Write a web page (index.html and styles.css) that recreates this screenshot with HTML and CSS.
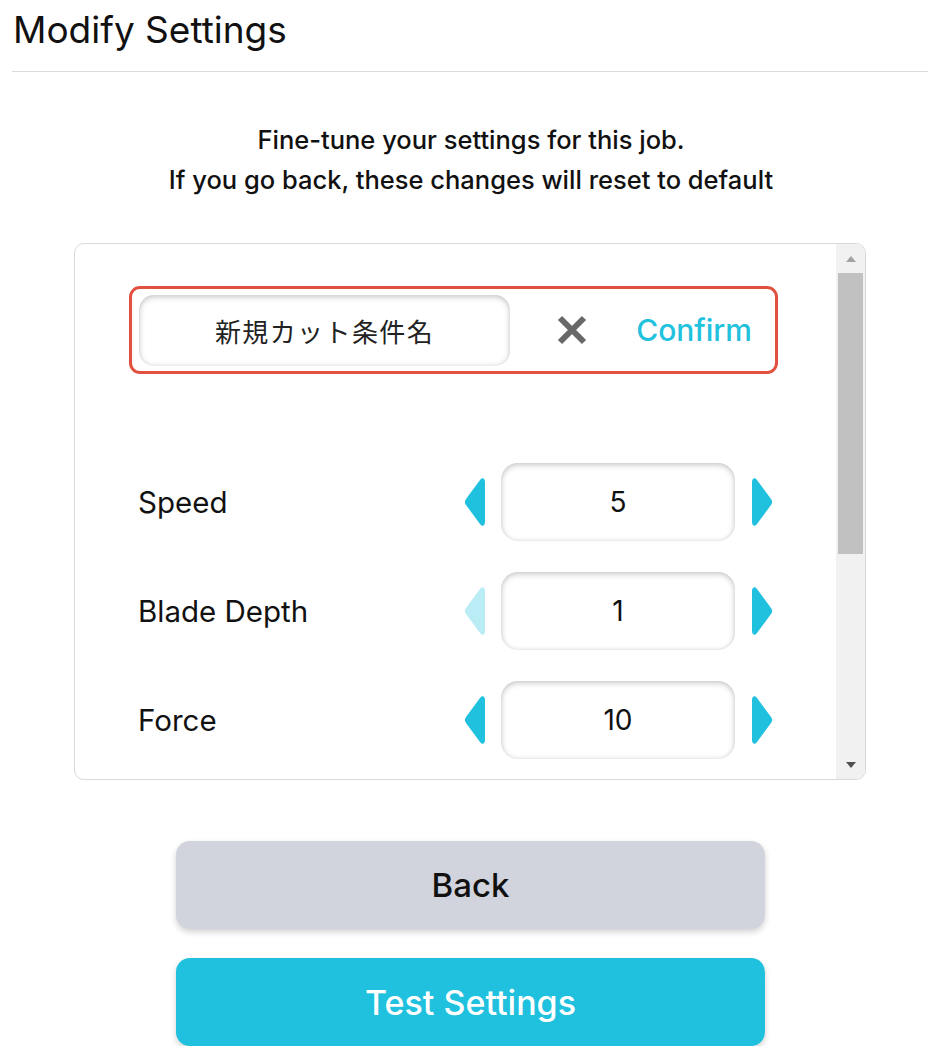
FILE: index.html
```html
<!DOCTYPE html>
<html lang="en">
<head>
<meta charset="utf-8">
<title>Modify Settings</title>
<link rel="stylesheet" href="styles.css">
</head>
<body>
<div class="page">
  <h1 class="title">Modify Settings</h1>
  <div class="divider"></div>
  <p class="intro">Fine-tune your settings for this job.<br>If you go back, these changes will reset to default</p>

  <div class="card">
    <div class="card-body">
      <div class="name-row">
        <div class="name-input">新規カット条件名</div>
        <span class="cancel" aria-label="Cancel">
          <svg width="34" height="34" viewBox="0 0 34 34"><path d="M5 5 L29 29 M29 5 L5 29" stroke="#686868" stroke-width="6" stroke-linecap="butt" fill="none"/></svg>
        </span>
        <span class="confirm">Confirm</span>
      </div>

      <div class="settings">
        <div class="setting">
          <span class="label">Speed</span>
          <div class="stepper">
            <svg class="arrow" width="21" height="50" viewBox="0 0 21 50"><path d="M21 5 C21 1 18 0 16 3 L2 22 C0.5 24 0.5 26 2 28 L16 47 C18 50 21 49 21 45 Z" fill="#20c1de"/></svg>
            <div class="value">5</div>
            <svg class="arrow" width="21" height="50" viewBox="0 0 21 50"><path d="M0 5 C0 1 3 0 5 3 L19 22 C20.5 24 20.5 26 19 28 L5 47 C3 50 0 49 0 45 Z" fill="#20c1de"/></svg>
          </div>
        </div>
        <div class="setting">
          <span class="label">Blade Depth</span>
          <div class="stepper">
            <svg class="arrow" width="21" height="50" viewBox="0 0 21 50"><path d="M21 5 C21 1 18 0 16 3 L2 22 C0.5 24 0.5 26 2 28 L16 47 C18 50 21 49 21 45 Z" fill="#b9ecf5"/></svg>
            <div class="value">1</div>
            <svg class="arrow" width="21" height="50" viewBox="0 0 21 50"><path d="M0 5 C0 1 3 0 5 3 L19 22 C20.5 24 20.5 26 19 28 L5 47 C3 50 0 49 0 45 Z" fill="#20c1de"/></svg>
          </div>
        </div>
        <div class="setting">
          <span class="label">Force</span>
          <div class="stepper">
            <svg class="arrow" width="21" height="50" viewBox="0 0 21 50"><path d="M21 5 C21 1 18 0 16 3 L2 22 C0.5 24 0.5 26 2 28 L16 47 C18 50 21 49 21 45 Z" fill="#20c1de"/></svg>
            <div class="value">10</div>
            <svg class="arrow" width="21" height="50" viewBox="0 0 21 50"><path d="M0 5 C0 1 3 0 5 3 L19 22 C20.5 24 20.5 26 19 28 L5 47 C3 50 0 49 0 45 Z" fill="#20c1de"/></svg>
          </div>
        </div>
      </div>
    </div>

    <div class="scrollbar">
      <div class="sb-btn"><svg width="12" height="8" viewBox="0 0 12 8"><path d="M6 1 L11 7 L1 7 Z" fill="#a3a3a3"/></svg></div>
      <div class="sb-thumb"></div>
      <div class="sb-track"></div>
      <div class="sb-btn"><svg width="12" height="8" viewBox="0 0 12 8"><path d="M1 1 L11 1 L6 7 Z" fill="#505050"/></svg></div>
    </div>
  </div>

  <div class="actions">
    <button class="btn btn-back">Back</button>
    <button class="btn btn-test">Test Settings</button>
  </div>
</div>
</body>
</html>
```

FILE: styles.css
```css
* { box-sizing: border-box; }

html, body {
  margin: 0;
  padding: 0;
  background: #ffffff;
}

body {
  font-family: "Inter", "Lato", "Noto Sans", sans-serif;
  color: #111111;
}

.page {
  width: 942px;
  display: flex;
  flex-direction: column;
}

.title {
  margin: 0;
  padding: 8px 0 0 13px;
  font-size: 37px;
  font-weight: 400;
  line-height: 44px;
  color: #111;
}

.divider {
  height: 1px;
  background: #dcdcdf;
  margin: 19px 14px 0 12px;
}

.intro {
  margin: 48px 0 0 0;
  text-align: center;
  font-size: 25.5px;
  font-weight: 500;
  line-height: 40px;
  color: #111;
}

.card {
  margin: 43px 0 0 74px;
  width: 792px;
  height: 537px;
  border: 1px solid #d8d8dd;
  border-radius: 10px;
  overflow: hidden;
  display: flex;
}

.card-body {
  flex: 1;
  padding: 42px 58px 0 54px;
  display: flex;
  flex-direction: column;
}

.name-row {
  height: 88px;
  border: 3px solid #e2513f;
  border-radius: 11px;
  display: flex;
  align-items: center;
  padding: 0 23px 0 7px;
}

.name-input {
  width: 371px;
  height: 71px;
  border-radius: 15px;
  background: #fff;
  box-shadow: inset 0 2px 6px rgba(0, 0, 0, 0.2), inset 0 0 4px rgba(0, 0, 0, 0.08);
  display: flex;
  align-items: center;
  justify-content: center;
  font-family: "Noto Sans CJK JP", "Noto Sans", sans-serif;
  font-size: 26px;
  letter-spacing: 1.4px;
  font-weight: 400;
  color: #222;
}

.cancel {
  display: flex;
  margin-left: 45px;
}

.confirm {
  margin-left: auto;
  font-size: 30px;
  font-weight: 500;
  color: #22c1de;
}

.settings {
  margin-top: 89px;
  display: flex;
  flex-direction: column;
  gap: 31px;
  padding: 0 5px 0 9px;
}

.setting {
  display: flex;
  align-items: center;
  justify-content: space-between;
  height: 78px;
}

.label {
  font-size: 29.5px;
  font-weight: 400;
  color: #111;
}

.stepper {
  display: flex;
  align-items: center;
}

.arrow { display: block; }

.value {
  width: 234px;
  height: 78px;
  margin: 0 17px 0 16px;
  border-radius: 17px;
  background: #fff;
  box-shadow: inset 0 2px 6px rgba(0, 0, 0, 0.2), inset 0 0 4px rgba(0, 0, 0, 0.08);
  display: flex;
  align-items: center;
  justify-content: center;
  font-size: 28px;
  font-weight: 400;
  color: #111;
}

.scrollbar {
  width: 29px;
  background: #f1f1f1;
  display: flex;
  flex-direction: column;
  align-items: center;
  padding: 0 1px;
}

.sb-btn {
  height: 29px;
  width: 100%;
  display: flex;
  align-items: center;
  justify-content: center;
}

.sb-thumb {
  width: 25px;
  height: 281px;
  background: #c1c1c1;
}

.sb-track { flex: 1; }

.actions {
  margin: 61px 0 0 176px;
  width: 589px;
  display: flex;
  flex-direction: column;
  gap: 29px;
}

.btn {
  height: 88px;
  border: none;
  border-radius: 14px;
  font-family: "Inter", "Lato", "Noto Sans", sans-serif;
  font-weight: 500;
  box-shadow: 0 3px 6px rgba(0, 0, 0, 0.18);
}

.btn-back {
  background: #d1d4dc;
  color: #111;
  font-size: 33px;
}

.btn-test {
  background: #1fc1de;
  color: #fff;
  font-size: 34px;
}
```
